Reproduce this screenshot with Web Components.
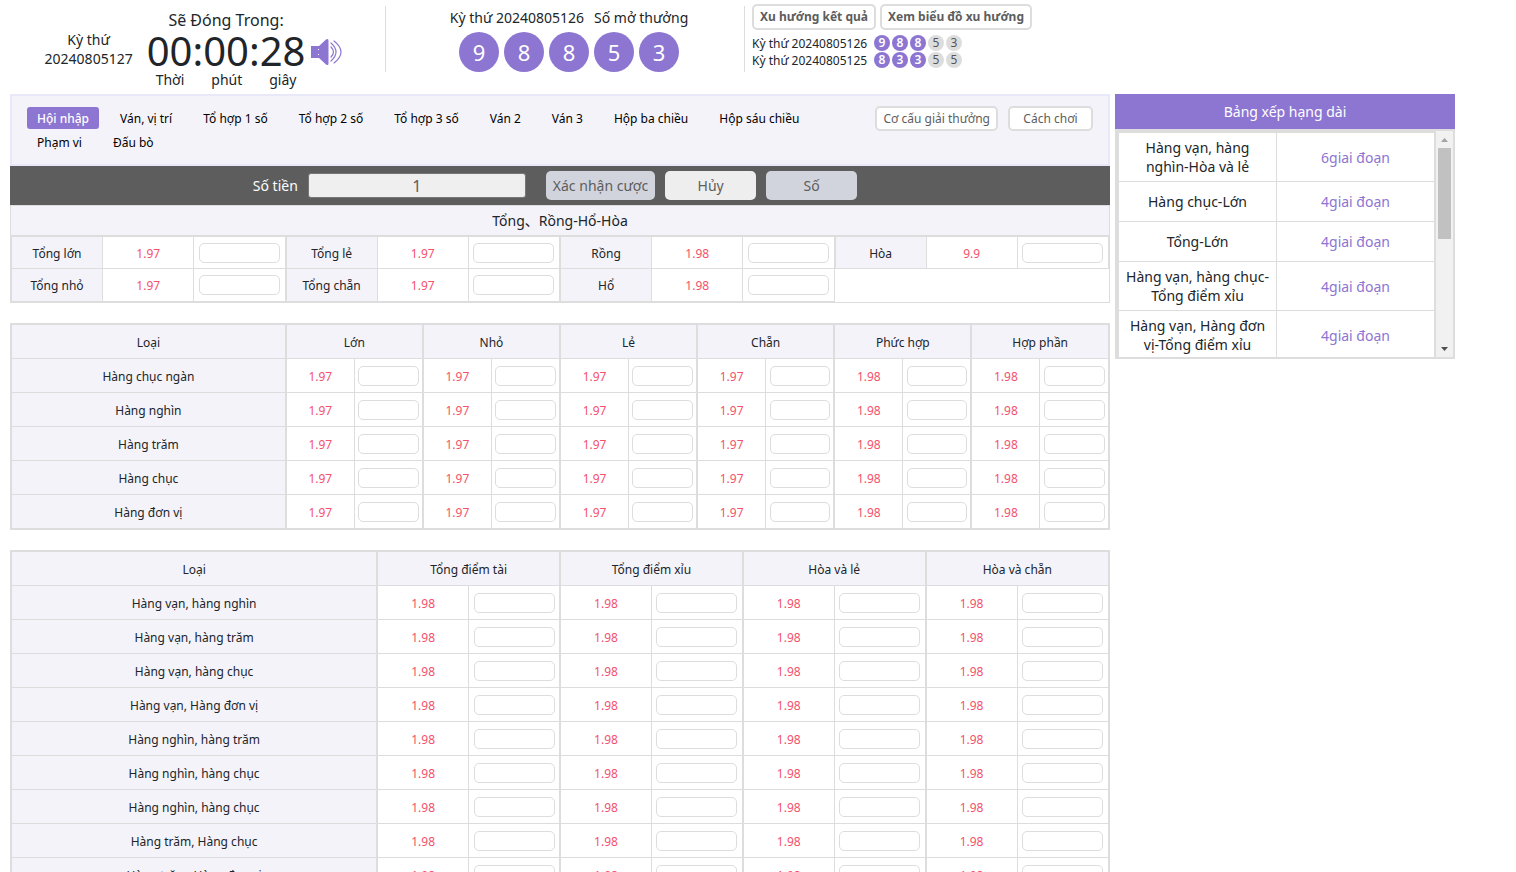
<!DOCTYPE html>
<html lang="vi">
<head>
<meta charset="utf-8">
<meta name="viewport" content="width=device-width, initial-scale=1">
<title>Xổ số</title>
<style>
  html { scrollbar-width: none; }
  body {
    margin: 0;
    background: #fff;
    color: #212529;
    font: 12px/16px "Noto Sans", "Noto Sans CJK SC", sans-serif;
    --accent: #8d75d2;
    --line: #ddd;
    --tint: #f4f3fa;
    --odds: #f4516c;
  }
</style>
</head>
<body>
<lottery-app></lottery-app>

<script>
const define = (name, css, html, setup) => {
  const template = document.createElement('template');
  template.innerHTML = `<style>:host{display:block;box-sizing:border-box}*{box-sizing:border-box}button,input{font:inherit;color:inherit;margin:0}button{cursor:pointer}${css}</style>${html}`;
  customElements.define(name, class extends HTMLElement {
    constructor() {
      super();
      this.attachShadow({ mode: 'open' }).append(template.content.cloneNode(true));
    }
    connectedCallback() {
      if (setup && !this.ready) { this.ready = true; setup(this, this.shadowRoot); }
    }
  });
};

const cellInput = label => `<input type="text" aria-label="${label}">`;

define('number-ball', `
  :host { display: grid; place-items: center; width: 40px; height: 40px; border-radius: 50%;
    background: var(--accent); color: #fff; font-size: 22px; line-height: 40px; }
  :host([small]) { width: 16px; height: 16px; font-size: 12px; line-height: 16px; font-weight: 600; }
  :host([muted]) { background: var(--line); color: #555; font-weight: 400; }
`, `<slot></slot>`);

define('countdown-clock', `
  :host { display: flex; justify-content: center; align-items: center; padding: 10px 8px 6px 0; }
  .period { margin-right: 14px; text-align: center; font-size: 14px; line-height: 19px; }
  .period span { display: block; }
  .title { text-align: center; font-size: 16px; line-height: 20px; }
  time { display: block; font-size: 40px; line-height: 42px; }
  .units { display: flex; justify-content: space-between; padding: 0 9px; font-size: 14px; }
  button { display: flex; margin: 6px 0 0 6px; padding: 0; border: 0; background: none; }
`, `
  <div class="period"><span>Kỳ thứ</span><span>20240805127</span></div>
  <div>
    <div class="title">Sẽ Đóng Trong:</div>
    <time>00:00:28</time>
    <div class="units"><span>Thời</span><span>phút</span><span>giây</span></div>
  </div>
  <button type="button" aria-label="Âm thanh">
    <svg width="31" height="28" viewBox="0 0 31 28">
      <path fill="#8d75d2" d="M0 8h8v3H7v1h1v4H7v1h1v3H0zM8 8l7-6.500q2.500-1.500 2.500 1v23q0 2.500-2.500 1L8 20z"/>
      <g fill="none" stroke="#8d75d2" stroke-width="1.200" stroke-linecap="round">
        <path d="M20 9q5 5 0 10"/><path d="M20 5q10 9 0 18"/><path d="M23 3q14 11 0 22"/>
      </g>
    </svg>
  </button>
`);

define('latest-draw', `
  :host { padding-right: 10px; }
  p { display: flex; justify-content: center; gap: 10px; margin: 0 0 4px; font-size: 14px; line-height: 20px; }
  .balls { display: flex; justify-content: center; gap: 5px; }
`, `
  <p><span>Kỳ thứ 20240805126</span><span>Số mở thưởng</span></p>
  <div class="balls"><number-ball>9</number-ball><number-ball>8</number-ball><number-ball>8</number-ball><number-ball>5</number-ball><number-ball>3</number-ball></div>
`);

define('draw-history', `
  :host { padding-left: 7px; }
  .actions { display: flex; gap: 4px; margin: -2px 0 5px; }
  button { height: 26px; padding: 0 6px; border: 2px solid var(--line); border-radius: 5px;
    background: #fff; color: #5d5d5d; font-weight: 700; white-space: nowrap; }
  .row { display: flex; gap: 2px; line-height: 17px; }
  .row span { min-width: 120px; white-space: nowrap; }
`, `
  <div class="actions"><button type="button">Xu hướng kết quả</button><button type="button">Xem biểu đồ xu hướng</button></div>
  <div class="row"><span>Kỳ thứ 20240805126</span><number-ball small>9</number-ball><number-ball small>8</number-ball><number-ball small>8</number-ball><number-ball small muted>5</number-ball><number-ball small muted>3</number-ball></div>
  <div class="row"><span>Kỳ thứ 20240805125</span><number-ball small>8</number-ball><number-ball small>3</number-ball><number-ball small>3</number-ball><number-ball small muted>5</number-ball><number-ball small muted>5</number-ball></div>
`);

define('game-tabs', `
  :host { display: flex; align-items: flex-start; justify-content: space-between; min-height: 72px;
    padding: 10px 15px; border: 2px solid #e8e8f8; background: var(--tint); }
  nav { display: flex; flex-wrap: wrap; gap: 2px 11px; flex: 0 1 820px; padding-top: 1px; }
  a { padding: 2px 10px 0; border-radius: 3px; line-height: 20px; color: #000; text-decoration: none; white-space: nowrap; }
  a[aria-current] { background: var(--accent); color: #fff; font-weight: 500; }
  .actions { display: flex; gap: 10px; }
  button { min-width: 85px; height: 25px; padding: 0 6px; border: 2px solid var(--line); border-radius: 5px;
    background: #fff; color: #5d5d5d; white-space: nowrap; }
`, `
  <nav>
    <a href="#" aria-current="page">Hội nhập</a><a href="#">Ván, vị trí</a><a href="#">Tổ hợp 1 số</a><a href="#">Tổ hợp 2 số</a><a href="#">Tổ hợp 3 số</a><a href="#">Ván 2</a><a href="#">Ván 3</a><a href="#">Hộp ba chiều</a><a href="#">Hộp sáu chiều</a><a href="#">Phạm vi</a><a href="#">Đấu bò</a>
  </nav>
  <div class="actions"><button type="button">Cơ cấu giải thưởng</button><button type="button">Cách chơi</button></div>
`);

define('bet-bar', `
  :host { display: flex; align-items: center; justify-content: center; gap: 10px; min-height: 39px;
    padding-right: 10px; background: #5d5d5d; font-size: 14px; }
  label { color: #fff; }
  input { width: 218px; height: 25px; margin-right: 10px; padding: 0; border: 1px solid #767676; border-radius: 3px;
    background: #efefef; color: #5d5d5d; font-size: 16px; text-align: center; }
  button { min-width: 91px; height: 29px; padding: 0 7px; border: 0; border-radius: 5px; background: #d1d4dc; color: #5d5d5d; }
  .plain { background: #eee; }
`, `
  <label for="amount">Số tiền</label><input id="amount" type="text" value="1">
  <button type="button">Xác nhận cược</button><button type="button" class="plain">Hủy</button><button type="button">Số</button>
`);

const tableCss = `
  :host { border: 1px solid var(--line); }
  table { width: 100%; table-layout: fixed; border-collapse: collapse; text-align: center; }
  th, td { padding: 0; border: 1px solid var(--line); font-weight: 400; }
  th, .odds { padding-top: 2px; }
  th { background: var(--tint); }
  td.odds { color: var(--odds); }
  td input { display: block; width: 90%; height: 20px; margin: 0 auto; padding: 0 4px; border: 1px solid var(--line); border-radius: 5px; background: #fff; }
`;

define('quick-bets', tableCss + `
  h2 { margin: 0; border-bottom: 1px solid var(--line); background: var(--tint); text-align: center; font-size: 14px; font-weight: 400; line-height: 29px; }
  .groups { display: grid; grid-template-columns: repeat(4, 1fr); align-items: start; }
  tr { height: 32px; }
  tr + tr { height: 33px; }
`, `<h2>Tổng、Rồng-Hổ-Hòa</h2><div class="groups"></div>`, (host, root) => {
  const groups = [
    [['Tổng lớn', '1.97'], ['Tổng nhỏ', '1.97']],
    [['Tổng lẻ', '1.97'], ['Tổng chẵn', '1.97']],
    [['Rồng', '1.98'], ['Hổ', '1.98']],
    [['Hòa', '9.9']]
  ];
  root.querySelector('.groups').innerHTML = groups.map(rows =>
    `<table><tbody>${rows.map(([name, odds]) =>
      `<tr><th scope="row">${name}</th><td class="odds">${odds}</td><td>${cellInput(name)}</td></tr>`).join('')}</tbody></table>`).join('');
});

define('bet-table', tableCss + `
  :host { margin-top: 20px; }
  tr { height: 34px; }
  th + th, .odds { border-left-width: 2px; }
`, `<table></table>`, (host, root) => {
  const cols = JSON.parse(host.getAttribute('columns'));
  const rows = JSON.parse(host.getAttribute('rows'));
  const odds = JSON.parse(host.getAttribute('odds'));
  const half = `calc((100% - ${host.getAttribute('lead')}) / ${cols.length * 2})`;
  root.querySelector('table').innerHTML =
    `<colgroup><col style="width:${host.getAttribute('lead')}">${`<col style="width:${half}">`.repeat(cols.length * 2)}</colgroup>
    <thead><tr><th scope="col">Loại</th>${cols.map(c => `<th scope="col" colspan="2">${c}</th>`).join('')}</tr></thead>
    <tbody>${rows.map(r => `<tr><th scope="row">${r}</th>${cols.map((c, i) =>
      `<td class="odds">${odds[i]}</td><td>${cellInput(r + ' – ' + c)}</td>`).join('')}</tr>`).join('')}</tbody>`;
});

define('scroll-rail', `
  :host { display: flex; flex-direction: column; align-items: center; width: 17px; background: #f1f1f1; }
  svg { display: block; flex: none; }
  .track { flex: 1; width: 13px; }
  .thumb { height: 91px; background: #c1c1c1; }
`, `
  <svg width="17" height="17"><path fill="#a3a3a3" d="M5 11h7L8.500 7z"/></svg>
  <div class="track"><div class="thumb"></div></div>
  <svg width="17" height="17"><path fill="#505050" d="M5 7h7l-3.500 4z"/></svg>
`);

define('rank-panel', `
  h2 { margin: 0; background: var(--accent); color: #fff; text-align: center; font-size: 14px; font-weight: 400; line-height: 35px; }
  .box { display: flex; height: 230px; border: 2px solid var(--line); }
  .list { flex: 1; overflow-y: auto; scrollbar-width: none; }
  table { width: 100%; table-layout: fixed; border-collapse: collapse; border: 2px solid var(--line); text-align: center; font-size: 14px; line-height: 19px; }
  tr { height: 40px; }
  th, td { padding: 5px; border: 1px solid var(--line); font-weight: 400; }
  td { color: var(--accent); }
`, `
  <h2>Bảng xếp hạng dài</h2>
  <div class="box"><div class="list" tabindex="0"><table><tbody></tbody></table></div><scroll-rail></scroll-rail></div>
`, (host, root) => {
  const data = [
    ['Hàng vạn, hàng nghìn-Hòa và lẻ', 6], ['Hàng chục-Lớn', 4], ['Tổng-Lớn', 4],
    ['Hàng vạn, hàng chục-Tổng điểm xỉu', 4], ['Hàng vạn, Hàng đơn vị-Tổng điểm xỉu', 4]
  ];
  root.querySelector('tbody').innerHTML = data.map(([n, c]) => `<tr><th scope="row">${n}</th><td>${c}giai đoạn</td></tr>`).join('');
});

define('lottery-app', `
  header { display: grid; grid-template-columns: minmax(0, 375px) minmax(0, 359px) 1fr; align-items: start; min-height: 94px; margin-left: 10px; }
  latest-draw, draw-history { height: 66px; margin-top: 6px; border-left: 1px solid var(--line); }
  latest-draw { padding: 2px 0 0 8px; }
  main { display: grid; grid-template-columns: minmax(0, 1100px) 340px; gap: 5px; align-items: start; padding: 0 10px 20px; }
`, `
  <header><countdown-clock></countdown-clock><latest-draw></latest-draw><draw-history></draw-history></header>
  <main>
    <section>
      <game-tabs></game-tabs>
      <bet-bar></bet-bar>
      <quick-bets></quick-bets>
      <bet-table lead="25%" columns='["Lớn","Nhỏ","Lẻ","Chẵn","Phức hợp","Hợp phần"]' odds='["1.97","1.97","1.97","1.97","1.98","1.98"]'
        rows='["Hàng chục ngàn","Hàng nghìn","Hàng trăm","Hàng chục","Hàng đơn vị"]'></bet-table>
      <bet-table lead="33.333%" columns='["Tổng điểm tài","Tổng điểm xỉu","Hòa và lẻ","Hòa và chẵn"]' odds='["1.98","1.98","1.98","1.98"]'
        rows='["Hàng vạn, hàng nghìn","Hàng vạn, hàng trăm","Hàng vạn, hàng chục","Hàng vạn, Hàng đơn vị","Hàng nghìn, hàng trăm","Hàng nghìn, hàng chục","Hàng nghìn, hàng chục","Hàng trăm, Hàng chục","Hàng trăm, Hàng đơn vị","Hàng chục, Hàng đơn vị"]'></bet-table>
    </section>
    <rank-panel></rank-panel>
  </main>
`);
</script>
</body>
</html>
